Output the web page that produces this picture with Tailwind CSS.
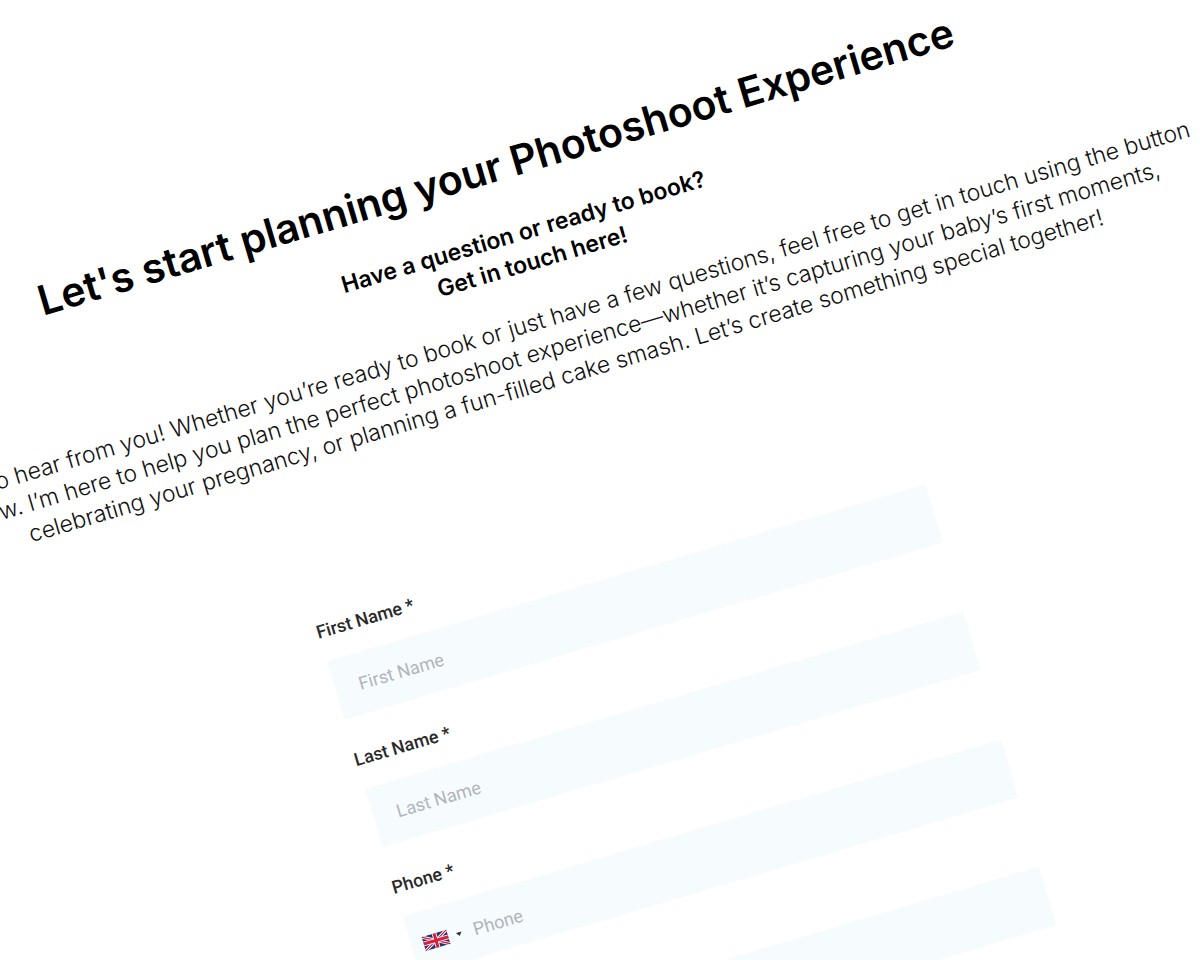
<!DOCTYPE html>
<html lang="en">
<head>
<meta charset="utf-8">
<meta name="viewport" content="width=device-width, initial-scale=1">
<title>Photoshoot enquiry</title>
<script src="https://cdn.jsdelivr.net/npm/@tailwindcss/browser@4"></script>
</head>
<body class="bg-white overflow-hidden h-screen">
<!-- Tilted sheet: wider than the window, so its text runs off the left edge -->
<main class="w-[1400px] -ml-[264px] pt-[274px] origin-[264px_0] rotate-[-16.5deg] text-black font-['Inter',sans-serif]">
  <header class="text-center">
    <h1 class="pr-4 text-[41px] leading-[52px] font-semibold">Let's start planning your Photoshoot Experience</h1>
    <h2 class="mt-[30px] text-[23px] leading-[31px] font-semibold">Have a question or ready to book?<br>Get in touch here!</h2>
    <p class="mt-[28px] text-[23px] leading-[30px] font-light whitespace-nowrap text-[#111]">I'd love to hear from you! Whether you’re ready to book or just have a few questions, feel free to get in touch using the button<br>below. I’m here to help you plan the perfect photoshoot experience—whether it’s capturing your baby’s first moments,<br>celebrating your pregnancy, or planning a fun-filled cake smash. Let’s create something special together!</p>
  </header>
  <form class="mx-auto mt-[149px] flex w-[628px] flex-col gap-[30px] font-['Roboto',sans-serif] text-lg leading-6">
    <div class="flex flex-col gap-[18px]">
      <label for="first" class="pl-[2px] font-medium text-[#2a2a2a]">First Name *</label>
      <input id="first" type="text" placeholder="First Name" class="ml-1 h-[61px] rounded-[3px] bg-[#f6fbfe] px-6 placeholder:text-[#b1b5b8] outline-none">
    </div>
    <div class="flex flex-col gap-[18px]">
      <label for="last" class="pl-[2px] font-medium text-[#2a2a2a]">Last Name *</label>
      <input id="last" type="text" placeholder="Last Name" class="ml-1 h-[61px] rounded-[3px] bg-[#f6fbfe] px-6 placeholder:text-[#b1b5b8] outline-none">
    </div>
    <div class="flex flex-col gap-[18px]">
      <label for="phone" class="pl-[2px] font-medium text-[#2a2a2a]">Phone *</label>
      <div class="ml-1 flex h-[61px] items-center rounded-[3px] bg-[#f6fbfe] pt-1 pl-3">
        <button type="button" aria-label="Country code" class="flex items-center gap-2">
          <svg class="h-[15px] w-[26px]" viewBox="0 0 60 34" aria-hidden="true">
            <rect width="60" height="34" fill="#26337a"/>
            <path d="M0 0L60 34M60 0L0 34" stroke="#fff" stroke-width="7"/>
            <path d="M0 0L60 34M60 0L0 34" stroke="#d8203e" stroke-width="3"/>
            <path d="M30 0V34M0 17H60" stroke="#fff" stroke-width="11"/>
            <path d="M30 0V34M0 17H60" stroke="#d8203e" stroke-width="7"/>
          </svg>
          <svg class="h-1 w-[6px]" viewBox="0 0 6 4" aria-hidden="true"><path d="M0 0H6L3 4Z" fill="#333"/></svg>
        </button>
        <input id="phone" type="tel" placeholder="Phone" class="min-w-0 flex-1 bg-transparent pl-3 placeholder:text-[#b1b5b8] outline-none">
      </div>
    </div>
    <div class="flex flex-col pt-[42px]">
      <input type="email" aria-label="Email" class="ml-1 h-[61px] rounded-[3px] bg-[#f6fbfe] px-6 outline-none">
    </div>
  </form>
</main>
</body>
</html>
